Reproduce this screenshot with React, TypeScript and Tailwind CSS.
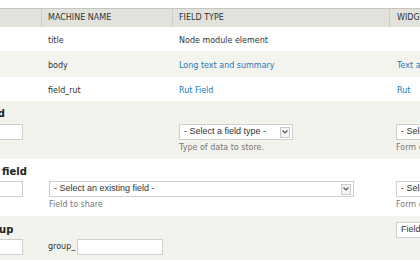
import React from 'react';

function Chevron() {
  return (
    <span className="mr-[2px] flex h-[11px] w-[10px] items-center justify-center border border-[#c9c9c9] bg-[#f4f4f4]">
      <svg width="6" height="4" viewBox="0 0 6 4">
        <path d="M0.5 0.5 L3 3 L5.5 0.5" fill="none" stroke="#555" strokeWidth="1.1" />
      </svg>
    </span>
  );
}

function Select({ text, width, arrow }: { text: string; width: string; arrow?: boolean }) {
  return (
    <div
      className={`flex h-[16px] shrink-0 items-center justify-between border border-[#cfcfcf] bg-white pl-[4px] font-['Liberation_Sans',sans-serif] text-[9px] text-[#333] ${width}`}
    >
      <span className="whitespace-nowrap">{text}</span>
      {arrow && <Chevron />}
    </div>
  );
}

function Input({ width }: { width: string }) {
  return <div className={`h-[16px] shrink-0 border border-[#cfcfcf] bg-white ${width}`} />;
}

function Desc({ children }: { children: React.ReactNode }) {
  return <div className="mt-[3px] whitespace-nowrap text-[8px] leading-[10px] text-[#777]">{children}</div>;
}

function Label({ children }: { children: React.ReactNode }) {
  return (
    <div className="h-[12px] whitespace-nowrap text-[10px] font-bold leading-[12px] text-[#222]">{children}</div>
  );
}

const rows = [
  { name: 'title', type: 'Node module element', link: false, widget: '' },
  { name: 'body', type: 'Long text and summary', link: true, widget: 'Text area with a summary' },
  { name: 'field_rut', type: 'Rut Field', link: true, widget: 'Rut' },
];

export default function App() {
  return (
    <div className="h-[260px] w-[420px] overflow-hidden bg-white pt-[8px] font-['DejaVu_Sans',sans-serif] text-[8px] text-[#333]">
      <div className="w-[560px]">
        {/* Cabecera */}
        <div className="flex h-[19px] border-t border-[#c4c5bf] bg-[#e1e2dc] uppercase text-[#333]">
          <div className="w-[42px] border-r border-[#cdcec8]" />
          <div className="flex w-[131px] items-center border-r border-[#cdcec8] pl-[6px]">Machine name</div>
          <div className="flex w-[217px] items-center border-r border-[#cdcec8] pl-[6px]">Field type</div>
          <div className="flex flex-1 items-center pl-[7px]">Widget</div>
        </div>

        {rows.map((row, i) => (
          <div
            key={row.name}
            className={`flex items-center pt-[3px] ${i === 1 ? 'h-[26px] bg-[#f3f4ee]' : 'h-[24px] bg-white'}`}
          >
            <div className="w-[42px]" />
            <div className="w-[131px] pl-[6px]">{row.name}</div>
            <div className={`w-[217px] pl-[6px] ${row.link ? 'text-[#2a78b8]' : ''}`}>{row.type}</div>
            <div className="flex-1 whitespace-nowrap pl-[7px] text-[#2a78b8]">{row.widget}</div>
          </div>
        ))}

        {/* Add new field */}
        <div className="flex h-[58px] items-start bg-[#f3f3ee]">
          <div className="w-[42px] pt-[7px]">
            <div className="-ml-[72px]">
              <Label>Add new field</Label>
              <div className="mt-[4px]">
                <Input width="w-[95px]" />
              </div>
            </div>
          </div>
          <div className="w-[131px]" />
          <div className="w-[217px] pl-[6px] pt-[23px]">
            <Select text="- Select a field type -" width="w-[114px]" arrow />
            <Desc>Type of data to store.</Desc>
          </div>
          <div className="flex-1 pl-[6px] pt-[23px]">
            <Select text="- Select a widget -" width="w-[110px]" />
            <Desc>Form element to edit the data.</Desc>
          </div>
        </div>

        {/* Add existing field */}
        <div className="flex h-[57px] items-start bg-white">
          <div className="w-[42px] pt-[7px]">
            <div className="-ml-[72px]">
              <Label>Add existing field</Label>
              <div className="mt-[3px]">
                <Input width="w-[95px]" />
              </div>
            </div>
          </div>
          <div className="w-[348px] pl-[7px] pt-[22px]">
            <Select text="- Select an existing field -" width="w-[305px]" arrow />
            <Desc>Field to share</Desc>
          </div>
          <div className="flex-1 pl-[6px] pt-[22px]">
            <Select text="- Select a widget -" width="w-[110px]" />
            <Desc>Form element to edit the data.</Desc>
          </div>
        </div>

        {/* Add new group */}
        <div className="flex h-[50px] items-start bg-[#f3f3ee]">
          <div className="w-[42px] pt-[8px]">
            <div className="-ml-[72px]">
              <Label>Add new group</Label>
              <div className="mt-[3px]">
                <Input width="w-[95px]" />
              </div>
            </div>
          </div>
          <div className="flex w-[131px] items-center pl-[6px] pt-[23px]">
            <span>group_</span>
            <div className="ml-[2px]">
              <Input width="w-[86px]" />
            </div>
          </div>
          <div className="w-[217px]" />
          <div className="flex-1 pl-[6px] pt-[6px]">
            <Select text="Fieldset" width="w-[110px]" />
          </div>
        </div>
      </div>
    </div>
  );
}
